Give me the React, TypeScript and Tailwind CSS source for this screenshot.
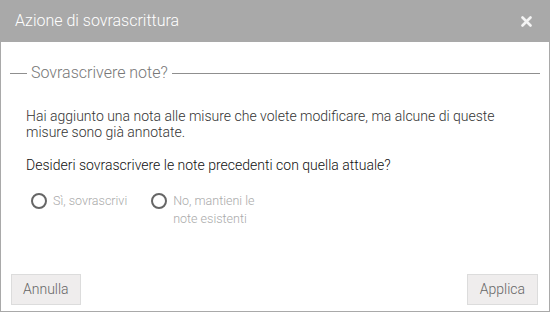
import React, { useState } from 'react';

export default function App() {
  const [choice, setChoice] = useState<string>('');

  return (
    <div className="w-[550px] h-[312px] flex flex-col bg-white font-['Roboto',sans-serif] font-light border-x border-b border-[#a9a9a9]">
      {/* Header */}
      <div className="h-[42px] -mx-px bg-[#a9a9a9] flex items-center justify-between pl-[15px] pr-[18px]">
        <span className="text-[16px] text-white">Azione di sovrascrittura</span>
        <svg width="11" height="11" viewBox="0 0 11 11" className="mt-px">
          <path d="M1.5 1.5 L9.5 9.5 M9.5 1.5 L1.5 9.5" stroke="#f4f4f4" strokeWidth="2.6" strokeLinecap="round" />
        </svg>
      </div>

      {/* Body */}
      <div className="flex-1">
        <div className="flex items-center mx-[9px] mt-[21px] gap-[4px]">
          <div className="w-[17px] h-px bg-[#8f8f8f]" />
          <span className="text-[16px] text-[#777] leading-[20px]">Sovrascrivere note?</span>
          <div className="flex-1 h-px bg-[#8f8f8f]" />
        </div>

        <div className="px-[25px] pt-[25px] text-[14px]">
          <p className="leading-[16px] text-[#333]">
            Hai aggiunto una nota alle misure che volete modificare, ma alcune di queste misure sono già annotate.
          </p>
          <p className="mt-[17px] leading-[16px] text-[#111]">
            Desideri sovrascrivere le note precedenti con quella attuale?
          </p>

          <div className="flex items-start gap-[24px] mt-[20px] pl-[5px]">
            {[
              { id: 'yes', label: 'Sì, sovrascrivi' },
              { id: 'no', label: 'No, mantieni le note esistenti' },
            ].map(opt => (
              <label key={opt.id} className="flex items-start gap-[6px] cursor-pointer" onClick={() => setChoice(opt.id)}>
                <span className="w-[16px] h-[16px] rounded-full border-[2px] border-[#666] shrink-0 flex items-center justify-center">
                  {choice === opt.id && <span className="w-[6px] h-[6px] rounded-full bg-[#666]" />}
                </span>
                <span className={`text-[12.5px] leading-[18px] text-[#aaa] -mt-px ${opt.id === 'no' ? 'w-[88px]' : ''}`}>
                  {opt.label}
                </span>
              </label>
            ))}
          </div>
        </div>
      </div>

      {/* Footer */}
      <div className="flex justify-between pl-[10px] pr-[11px] pb-[6px]">
        <button className="h-[31px] px-[11px] bg-[#efeded] border border-[#dcdcdc] text-[14px] text-[#666] font-light">
          Annulla
        </button>
        <button className="h-[31px] px-[12px] bg-[#efeded] border border-[#dcdcdc] text-[14px] text-[#666] font-light">
          Applica
        </button>
      </div>
    </div>
  );
}
